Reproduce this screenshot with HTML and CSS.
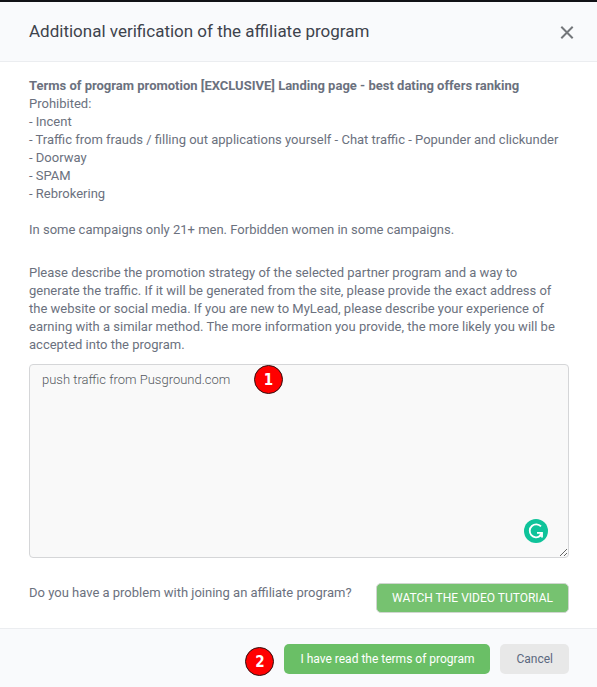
FILE: index.html
```html
<!DOCTYPE html>
<html lang="en">
<head>
    <meta charset="UTF-8">
    <meta name="viewport" content="width=device-width, initial-scale=1.0">
    <title>Additional verification of the affiliate program</title>
    <link rel="stylesheet" href="styles.css">
</head>
<body>
    <div class="modal" role="dialog" aria-labelledby="modal-title">
        <header class="modal-header">
            <h1 id="modal-title">Additional verification of the affiliate program</h1>
            <button type="button" class="close-btn" aria-label="Close">
                <svg width="14" height="14" viewBox="0 0 14 14" fill="none" stroke="#74777b" stroke-width="2">
                    <path d="M1.3 1.8L12.7 13.2M12.7 1.8L1.3 13.2"/>
                </svg>
            </button>
        </header>

        <form class="modal-form">
            <div class="modal-body">
                <p class="terms">
                    <strong>Terms of program promotion [EXCLUSIVE] Landing page - best dating offers ranking</strong><br>
                    Prohibited:<br>
                    - Incent<br>
                    - Traffic from frauds / filling out applications yourself - Chat traffic - Popunder and clickunder<br>
                    - Doorway<br>
                    - SPAM<br>
                    - Rebrokering<br>
                    <br>
                    In some campaigns only 21+ men. Forbidden women in some campaigns.
                </p>

                <label class="description" for="strategy">Please describe the promotion strategy of the selected partner program and a way to generate the traffic. If it will be generated from the site, please provide the exact address of the website or social media. If you are new to MyLead, please describe your experience of earning with a similar method. The more information you provide, the more likely you will be accepted into the program.</label>

                <div class="strategy-box">
                    <textarea id="strategy" name="strategy" spellcheck="false">push traffic from Pusground.com</textarea>
                    <span class="step step-one">1</span>
                    <svg class="grammar-icon" width="24" height="24" viewBox="0 0 24 24" fill="none">
                        <circle cx="12" cy="12" r="12" fill="#0fc39a"/>
                        <path d="M17 7.4A6.5 6.5 0 1 0 16.4 16.8" stroke="#fff" stroke-width="1.8"/>
                        <path d="M13 13.8H18V18.6" stroke="#fff" stroke-width="1.8"/>
                        <path d="M18 13.8L15.4 17.4" stroke="#fff" stroke-width="1.8"/>
                    </svg>
                </div>

                <div class="tutorial">
                    <p>Do you have a problem with joining an affiliate program?</p>
                    <button type="button" class="btn tutorial-btn">WATCH THE VIDEO TUTORIAL</button>
                </div>
            </div>

            <footer class="modal-footer">
                <span class="step">2</span>
                <button type="submit" class="btn accept-btn">I have read the terms of program</button>
                <button type="button" class="btn cancel-btn">Cancel</button>
            </footer>
        </form>
    </div>
</body>
</html>
```
FILE: styles.css
```css
* {
    box-sizing: border-box;
}

body {
    margin: 0;
    background: #f9fafc;
    color: #6b717e;
    font-family: Roboto, sans-serif;
    font-size: 13px;
    line-height: 18px;
}

p {
    margin: 0;
}

.modal {
    border-top: 2px solid #111216;
    background: #fff;
}

.modal-header {
    display: flex;
    justify-content: space-between;
    align-items: center;
    height: 60px;
    padding: 0 23px 0 29px;
    background: #f9fafc;
    border-bottom: 1px solid #ebedf0;
}

h1 {
    margin: 0;
    padding-bottom: 2px;
    color: #3e434d;
    font-size: 17px;
    font-weight: 400;
    line-height: 24px;
}

.close-btn {
    display: flex;
    padding: 0;
    background: none;
    border: none;
    cursor: pointer;
}

.modal-body {
    padding: 15px 28px 15px 29px;
}

.terms {
    margin-bottom: 25px;
}

.description {
    display: block;
    margin-bottom: 10px;
}

.strategy-box {
    position: relative;
    margin-bottom: 25px;
}

textarea {
    display: block;
    width: 100%;
    height: 194px;
    padding: 6px 12px;
    background: #f9f9f9;
    border: 1px solid #d5d6d8;
    border-radius: 4px;
    color: #55595f;
    font: 300 13px/18px Roboto, sans-serif;
    resize: vertical;
    outline: none;
}

.grammar-icon {
    position: absolute;
    right: 21px;
    bottom: 15px;
}

.step {
    display: flex;
    justify-content: center;
    align-items: center;
    width: 29px;
    height: 29px;
    background: #f00;
    border: 1px solid #301010;
    border-radius: 50%;
    color: #fff;
    font-family: "DejaVu Sans Condensed", "DejaVu Sans", sans-serif;
    font-size: 15px;
    font-weight: 700;
}

.step-one {
    position: absolute;
    top: 1px;
    left: 225px;
}

.tutorial {
    display: flex;
    justify-content: space-between;
}

.tutorial p {
    padding-top: 1px;
}

.btn {
    height: 30px;
    padding: 0 16px;
    border: none;
    border-radius: 5px;
    font: 400 12px/18px Roboto, sans-serif;
    cursor: pointer;
}

.tutorial-btn {
    padding: 0 15px;
    background: #76c270;
    border: 1px solid #d0d6d0;
    color: #fff;
}

.modal-footer {
    display: flex;
    justify-content: flex-end;
    gap: 10px;
    padding: 15px 28px 11px;
    background: #f9fafc;
    border-top: 1px solid #ebedf0;
}

.modal-footer .step {
    margin-top: 3px;
}

.accept-btn {
    background: #6abf66;
    color: #fff;
}

.cancel-btn {
    background: #e8e8e8;
    color: #5c6880;
}
```
